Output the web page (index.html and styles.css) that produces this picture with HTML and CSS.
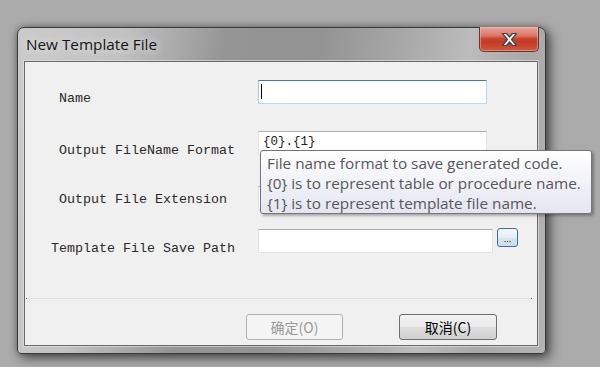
FILE: index.html
```html
<!DOCTYPE html>
<html>
<head>
<meta charset="utf-8">
<link rel="stylesheet" href="styles.css">
</head>
<body>
<div class="window">
  <div class="titlebar">
    <span class="title">New Template File</span>
    <div class="close">
      <svg width="17" height="15" viewBox="0 0 17 15"><path d="M1.5 1.5 H5.5 L8.5 5 L11.5 1.5 H15.5 L10.6 7.5 L15.5 13.5 H11.5 L8.5 10 L5.5 13.5 H1.5 L6.4 7.5 Z" fill="#f4f4f4" stroke="#3d4552" stroke-width="1.2" stroke-linejoin="round"/></svg>
    </div>
  </div>
  <div class="client">
    <div class="form">
      <label class="lbl l-name">Name</label>
      <div class="field"><div class="input focus"><span class="caret"></span></div></div>
      <label class="lbl l-format">Output FileName Format</label>
      <div class="field"><div class="input">{0}.{1}</div></div>
      <label class="lbl l-ext">Output File Extension</label>
      <div class="field"><div class="input"></div></div>
      <label class="lbl l-path">Template File Save Path</label>
      <div class="field"><div class="input wide"></div><div class="browse">...</div></div>
    </div>
    <div class="sep"></div>
    <div class="actions">
      <div class="btn disabled">确定(O)</div>
      <div class="btn">取消(C)</div>
    </div>
  </div>
</div>
<div class="tooltip">
  <div>File name format to save generated code.</div>
  <div>{0} is to represent table or procedure name.</div>
  <div>{1} is to represent template file name.</div>
</div>
</body>
</html>
```
FILE: styles.css
```css
html, body { margin: 0; padding: 0; }
body {
  background: #ababab;
  width: 600px;
  height: 367px;
  overflow: hidden;
  position: relative;
  padding-top: 27px;
  padding-left: 17px;
  box-sizing: border-box;
}
.window {
  width: 529px;
  height: 327px;
  box-sizing: border-box;
  border: 1px solid #3a3a3a;
  border-radius: 7px 7px 4px 4px;
  background: linear-gradient(100deg, #cbcbcb 0%, #c2c2c2 18%, #959595 36%, #939393 52%, #a7a7a7 66%, #bcbcbc 78%, #a9a9a9 88%, #b4b4b4 100%);
  box-shadow: 4px 4px 12px rgba(0,0,0,0.55), 0 0 6px rgba(0,0,0,0.3);
  padding: 0 7px 7px 6px;
  display: flex;
  flex-direction: column;
}
.titlebar {
  height: 33px;
  display: flex;
  align-items: flex-start;
  flex: none;
}
.title {
  font-family: "Open Sans", "Noto Sans", sans-serif;
  font-size: 15.3px;
  color: #141414;
  margin: 6px 0 0 2px;
  line-height: 20px;
  text-shadow: 0 0 8px rgba(235,235,235,0.9), 0 0 14px rgba(235,235,235,0.8);
}
.close {
  margin: -1px -1px 0 auto;
  width: 60px;
  height: 25px;
  box-sizing: border-box;
  border: 1px solid #5b3a32;
  border-top: none;
  border-radius: 0 0 5px 5px;
  background: linear-gradient(#e9a497 0%, #db7a68 35%, #c8402a 50%, #c53c26 65%, #d4573f 100%);
  box-shadow: inset 0 0 0 1px rgba(255,200,190,0.45);
  display: flex;
  align-items: center;
  justify-content: center;
}
.close svg { display: block; margin-top: 1px; }
.client {
  flex: 1;
  background: #f0f0f0;
  border: 1px solid #6a6a6a;
  box-shadow: 0 0 0 1px rgba(230,230,230,0.6);
  display: flex;
  flex-direction: column;
}
.form {
  display: grid;
  grid-template-columns: 233px 1fr;
  grid-template-rows: 51px 55px 43px 24px;
  margin-top: 18px;
}
.lbl {
  font-family: "Liberation Mono", monospace;
  font-size: 13.33px;
  line-height: 16px;
  color: #2a2a2a;
  padding-left: 34px;
}
.l-name { padding-top: 11px; }
.l-format { padding-top: 12px; }
.l-ext { padding-top: 6px; }
.l-path { padding-top: 12px; padding-left: 26px; }
.field { display: flex; align-items: flex-start; }
.input {
  width: 229px;
  height: 24px;
  box-sizing: border-box;
  background: #fff;
  border: 1px solid #e2e3ea;
  border-top-color: #abadb3;
  font-family: "Liberation Mono", monospace;
  font-size: 12.5px;
  line-height: 20px;
  padding-left: 4px;
  color: #222;
}
.input.focus {
  border-color: #a9cce6 #b5d7ee #b7d9ed #a9cce6;
  border-top-color: #3d7bad;
}
.caret {
  display: block;
  width: 1px;
  height: 15px;
  background: #000;
  margin: 3px 0 0 -2px;
}
.input.wide { width: 235px; }
.browse {
  width: 21px;
  height: 19px;
  margin: -1px 0 0 4px;
  box-sizing: border-box;
  border: 1px solid #3c6f9e;
  border-radius: 3px;
  background: linear-gradient(#f4f8fb 0%, #e6eef5 50%, #d7e4ef 51%, #cddde9 100%);
  font-family: "Liberation Sans", sans-serif;
  font-size: 9px;
  line-height: 20px;
  text-align: center;
  color: #000;
}
.sep {
  margin: 45px 5px 0 1px;
  height: 1px;
  background: #e2e2e2;
  border-left: 1px solid #707070;
  border-right: 1px solid #707070;
}
.actions {
  display: flex;
  justify-content: flex-end;
  gap: 56px;
  padding-right: 40px;
  margin-top: 15px;
}
.btn {
  width: 98px;
  height: 26px;
  box-sizing: border-box;
  border: 1px solid #707070;
  border-radius: 3px;
  background: linear-gradient(#f2f2f2 0%, #ebebeb 50%, #dddddd 51%, #cfcfcf 100%);
  font-family: "Noto Sans CJK SC", sans-serif;
  font-size: 14px;
  line-height: 24px;
  text-align: center;
  color: #000;
}
.btn.disabled {
  width: 97px;
  border-color: #adb2b5;
  background: #f4f4f4;
  color: #9a9a9a;
}
.tooltip {
  position: absolute;
  left: 260px;
  top: 150px;
  width: 332px;
  height: 64px;
  box-sizing: border-box;
  border: 1px solid #767676;
  border-radius: 3px;
  background: linear-gradient(#ffffff, #e4e5f0);
  box-shadow: 2px 2px 3px rgba(0,0,0,0.3);
  font-family: "Open Sans", "Noto Sans", sans-serif;
  font-size: 15.3px;
  line-height: 20px;
  color: #575757;
  padding: 2px 0 0 6px;
  white-space: nowrap;
}
```
